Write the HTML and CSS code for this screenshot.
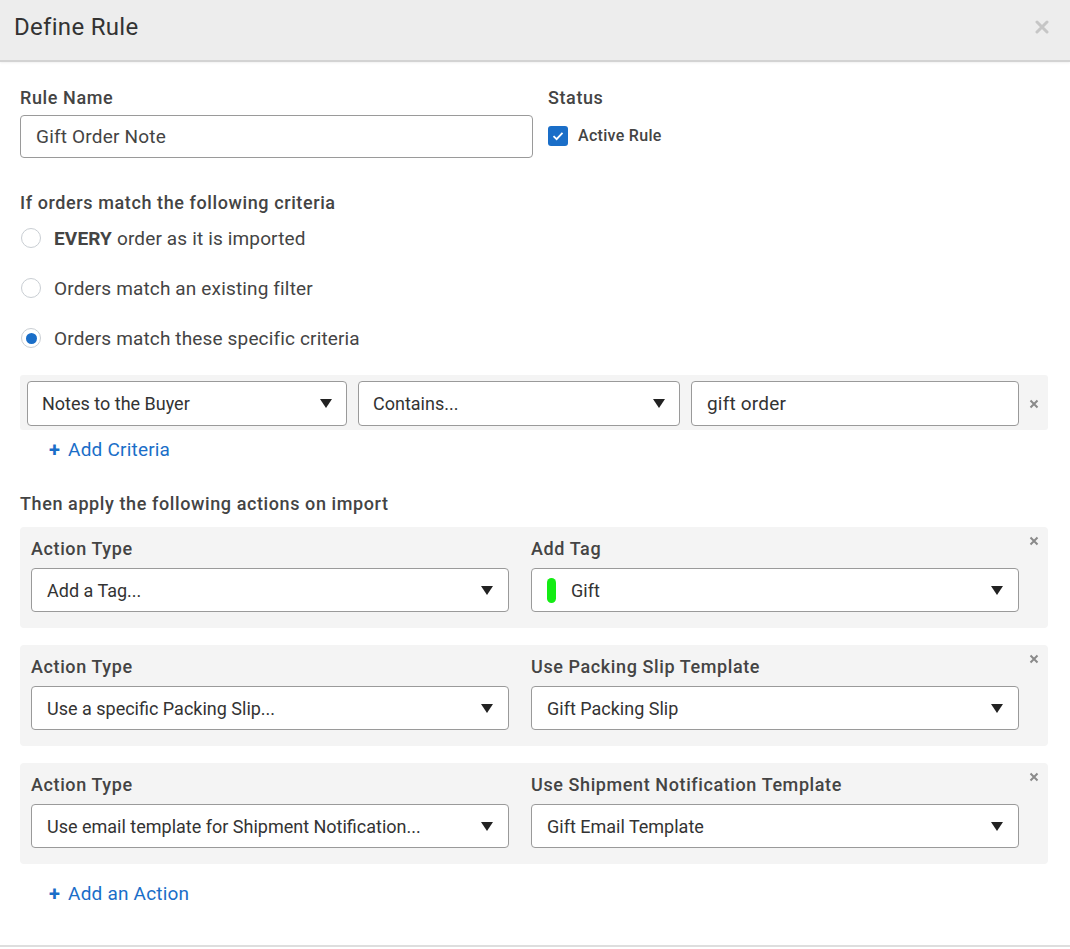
FILE: index.html
```html
<!DOCTYPE html>
<html>
<head>
<meta charset="utf-8">
<link rel="stylesheet" href="styles.css">
</head>
<body>
<div class="modal">
  <div class="header">
    <h1 class="title">Define Rule</h1>
    <span class="close-big"><svg width="14" height="14" viewBox="0 0 14 14"><path d="M2 2L12 12M12 2L2 12" stroke="#c6c6c6" stroke-width="3" stroke-linecap="round"/></svg></span>
  </div>
  <div class="content">
    <div class="top-row">
      <div class="name-col">
        <div class="label">Rule Name</div>
        <div class="textbox">Gift Order Note</div>
      </div>
      <div class="status-col">
        <div class="label">Status</div>
        <div class="check-row">
          <span class="checkbox"><svg width="12" height="10" viewBox="0 0 12 10"><path d="M1.5 5.2L4.6 8.2L10.5 1.8" fill="none" stroke="#fff" stroke-width="1.8"/></svg></span>
          <span class="check-label">Active Rule</span>
        </div>
      </div>
    </div>

    <div class="label section-label">If orders match the following criteria</div>
    <div class="radio-row"><span class="radio"></span><span class="radio-text"><b>EVERY</b> order as it is imported</span></div>
    <div class="radio-row"><span class="radio"></span><span class="radio-text">Orders match an existing filter</span></div>
    <div class="radio-row"><span class="radio checked"></span><span class="radio-text">Orders match these specific criteria</span></div>

    <div class="criteria">
      <div class="select"><span>Notes to the Buyer</span><span class="arrow"></span></div>
      <div class="select"><span>Contains...</span><span class="arrow"></span></div>
      <div class="select input-like"><span>gift order</span></div>
      <span class="x-small"><svg width="10" height="10" viewBox="0 0 10 10"><path d="M1.5 1.5L8.5 8.5M8.5 1.5L1.5 8.5" stroke="#8a8a8a" stroke-width="2"/></svg></span>
    </div>
    <div class="add-link"><span class="plus">+</span>Add Criteria</div>

    <div class="label actions-label">Then apply the following actions on import</div>

    <div class="action">
      <div class="field">
        <div class="label">Action Type</div>
        <div class="select tall"><span>Add a Tag...</span><span class="arrow"></span></div>
      </div>
      <div class="field">
        <div class="label">Add Tag</div>
        <div class="select tall"><span class="tag-value"><span class="tag-pill"></span>Gift</span><span class="arrow"></span></div>
      </div>
      <span class="x-small x-action"><svg width="10" height="10" viewBox="0 0 10 10"><path d="M1.5 1.5L8.5 8.5M8.5 1.5L1.5 8.5" stroke="#8a8a8a" stroke-width="2"/></svg></span>
    </div>

    <div class="action">
      <div class="field">
        <div class="label">Action Type</div>
        <div class="select tall"><span>Use a specific Packing Slip...</span><span class="arrow"></span></div>
      </div>
      <div class="field">
        <div class="label">Use Packing Slip Template</div>
        <div class="select tall"><span>Gift Packing Slip</span><span class="arrow"></span></div>
      </div>
      <span class="x-small x-action"><svg width="10" height="10" viewBox="0 0 10 10"><path d="M1.5 1.5L8.5 8.5M8.5 1.5L1.5 8.5" stroke="#8a8a8a" stroke-width="2"/></svg></span>
    </div>

    <div class="action">
      <div class="field">
        <div class="label">Action Type</div>
        <div class="select tall"><span>Use email template for Shipment Notification...</span><span class="arrow"></span></div>
      </div>
      <div class="field">
        <div class="label">Use Shipment Notification Template</div>
        <div class="select tall"><span>Gift Email Template</span><span class="arrow"></span></div>
      </div>
      <span class="x-small x-action"><svg width="10" height="10" viewBox="0 0 10 10"><path d="M1.5 1.5L8.5 8.5M8.5 1.5L1.5 8.5" stroke="#8a8a8a" stroke-width="2"/></svg></span>
    </div>

    <div class="add-link add-action"><span class="plus">+</span>Add an Action</div>
  </div>
</div>
</body>
</html>
```

FILE: styles.css
```css
* { box-sizing: border-box; }
html, body { margin: 0; padding: 0; background: #fff; }
body { font-family: Roboto, "Liberation Sans", sans-serif; color: #444; width: 1070px; height: 949px; overflow: hidden; }

.modal { width: 1070px; height: 947px; border-bottom: 2px solid #dedede; }

.header {
  height: 62px;
  background: #ededed;
  border-bottom: 2px solid #d3d3d3;
  box-shadow: 0 1px 2px rgba(0,0,0,0.06);
  display: flex;
  align-items: center;
  justify-content: space-between;
  padding: 0 21px 0 14px;
}
.title { margin: 0; font-size: 24px; font-weight: 400; color: #333; padding-bottom: 6px; letter-spacing: 0.3px; }
.close-big { display: flex; padding-bottom: 6px; }

.content { padding: 26px 22px 0 20px; }

.label { font-size: 18px; font-weight: 500; color: #444; line-height: 20px; letter-spacing: 0.6px; }

.top-row { display: flex; gap: 15px; }
.name-col { width: 513px; }
.name-col .label { margin-bottom: 7px; }
.status-col .label { margin-bottom: 17px; }
.textbox {
  height: 43px;
  border: 1px solid #9a9a9a;
  border-radius: 4px;
  padding: 0 15px;
  display: flex;
  align-items: center;
  font-size: 19px;
  letter-spacing: 0.2px;
  color: #444;
}
.check-row { display: flex; align-items: center; gap: 10px; }
.checkbox {
  width: 20px; height: 20px;
  background: #1a6ec8;
  border-radius: 3px;
  display: flex; align-items: center; justify-content: center;
  margin-top: 1px;
}
.check-label { font-size: 16px; font-weight: 500; color: #444; letter-spacing: 0.3px; }

.section-label { margin-top: 35px; }

.radio-row { height: 50px; display: flex; align-items: center; gap: 13px; padding-left: 1px; }
.radio {
  width: 20px; height: 20px;
  border: 1.5px solid #c9ced3;
  border-radius: 50%;
  background: #fff;
  display: flex; align-items: center; justify-content: center;
  flex: none;
}
.radio.checked::after {
  content: "";
  width: 11px; height: 11px;
  border-radius: 50%;
  background: #1a6ec8;
}
.radio-text { font-size: 19px; color: #444; letter-spacing: 0.15px; }
.radio-text b { font-weight: 700; }

.criteria {
  margin-top: 12px;
  background: #f4f4f4;
  border-radius: 3px;
  padding: 6px 0 4px 7px;
  display: grid;
  grid-template-columns: 320px 322px 328px 29px;
  column-gap: 11px;
  align-items: center;
}
.criteria .x-small { justify-self: start; margin-left: -1px; }

.select {
  height: 45px;
  background: #fff;
  border: 1px solid #9a9a9a;
  border-radius: 4px;
  display: flex;
  align-items: center;
  justify-content: space-between;
  padding: 0 14px 0 14px;
  font-size: 18px;
  color: #333;
}
.select.input-like { font-size: 19px; padding-left: 15px; letter-spacing: 0.2px; }
.arrow {
  width: 0; height: 0;
  border-left: 6px solid transparent;
  border-right: 6px solid transparent;
  border-top: 9px solid #222;
}
.x-small { display: flex; align-items: center; }

.add-link { color: #1a6ec8; font-size: 19px; letter-spacing: 0.2px; margin-top: 10px; padding-left: 29px; line-height: 20px; display: flex; align-items: center; }
.plus { font-weight: 700; font-size: 20px; margin-right: 8px; }

.actions-label { margin-top: 34px; margin-bottom: 13px; }

.action {
  position: relative;
  background: #f4f4f4;
  border-radius: 4px;
  padding: 12px 29px 16px 11px;
  display: grid;
  grid-template-columns: 478px 1fr;
  column-gap: 22px;
  margin-bottom: 17px;
}
.field .label { margin-bottom: 9px; }
.select.tall { height: 44px; padding: 0 15px 0 15px; }
.x-action { position: absolute; top: 9px; right: 9px; }

.tag-value { display: flex; align-items: center; }
.tag-pill { width: 9px; height: 25px; border-radius: 5px; background: #14ec14; margin-right: 15px; }

.add-action { margin-top: 20px; }
```
